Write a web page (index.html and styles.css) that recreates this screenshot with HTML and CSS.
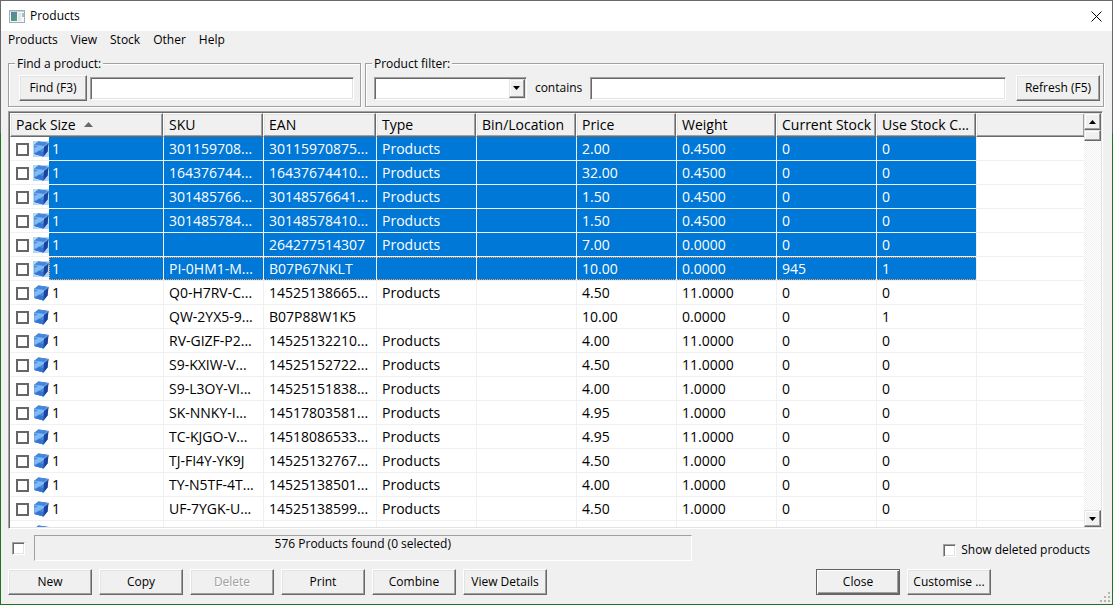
FILE: index.html
```html
<!DOCTYPE html>
<html lang="en">
<head>
    <meta charset="UTF-8">
    <meta name="viewport" content="width=device-width, initial-scale=1.0">
    <title>Products</title>
    <link rel="stylesheet" href="styles.css">
</head>
<body>

<!-- Shared icons -->
<svg class="icon-defs" aria-hidden="true">
    <symbol id="cube" viewBox="0 0 16 16">
        <path d="M1 4 L5.5 0.5 L15.5 2 L14.5 10.5 L10.5 15.5 L1.5 13 Z" fill="#2a62c0"/>
        <path d="M1 4 L5.5 0.5 L15.5 2 L11 5.5 Z" fill="#4388dc"/>
        <path d="M1 4 L11 5.5 L10.5 15.5 L1.5 13 Z" fill="#4a8fe6"/>
        <path d="M1.2 7 L6 4.8 L11 5.5 L10.9 7 L1.4 12 Z" fill="#83baf4"/>
        <path d="M1.5 13 L6 10 L10.8 11 L10.5 15.5 Z" fill="#3574d2"/>
        <path d="M11 5.5 L15.5 2 L14.5 10.5 L10.5 15.5 Z" fill="#1d449c"/>
        <path d="M1 4 L11 5.5 L15.5 2" fill="none" stroke="#8fc0f4" stroke-width="0.8"/>
    </symbol>
</svg>

<div class="window">
    <header class="title-bar">
        <svg class="app-icon" viewBox="0 0 16 13" aria-hidden="true">
            <defs>
                <linearGradient id="pane" x1="0" y1="0" x2="1" y2="1">
                    <stop offset="0" stop-color="#5b7fb0"/>
                    <stop offset="1" stop-color="#4fa36c"/>
                </linearGradient>
            </defs>
            <rect x="0.5" y="0.5" width="15" height="12" fill="#f4f6f8" stroke="#a3abb3"/>
            <rect x="1" y="1" width="14" height="1" fill="#c9d2da"/>
            <rect x="2" y="2" width="6" height="9" fill="url(#pane)"/>
            <rect x="9" y="3" width="3" height="8" fill="#dfe5ea"/>
            <rect x="13" y="3" width="2" height="4" fill="#9fc7a8"/>
        </svg>
        <h1>Products</h1>
        <button class="close-box" type="button" aria-label="Close window">
            <svg viewBox="0 0 11 11"><path d="M0.5 0.5 L10.5 10.5 M10.5 0.5 L0.5 10.5" stroke="#000" fill="none"/></svg>
        </button>
    </header>

    <nav class="menu">
        <a href="#">Products</a>
        <a href="#">View</a>
        <a href="#">Stock</a>
        <a href="#">Other</a>
        <a href="#">Help</a>
    </nav>

    <!-- Search and filter -->
    <div class="toolbar">
        <fieldset class="group find">
            <legend>Find a product:</legend>
            <div class="group-row">
                <button class="btn" type="button">Find (F3)</button>
                <input class="field" type="text" aria-label="Find a product">
            </div>
        </fieldset>
        <fieldset class="group filter">
            <legend>Product filter:</legend>
            <div class="group-row">
                <div class="combo">
                    <select id="filter-field" class="field" aria-label="Filter field">
                        <option value=""></option>
                    </select>
                    <span class="combo-arrow"><svg viewBox="0 0 7 4"><path d="M0 0 H7 L3.5 4 Z"/></svg></span>
                </div>
                <label for="filter-text">contains</label>
                <input id="filter-text" class="field" type="text">
                <button class="btn refresh" type="button">Refresh (F5)</button>
            </div>
        </fieldset>
    </div>

    <!-- Product list -->
    <div class="list">
        <div class="list-body">
            <table>
                <colgroup>
                    <col class="col-pack">
                    <col class="col">
                    <col class="col-ean">
                    <col class="col"><col class="col"><col class="col">
                    <col class="col"><col class="col"><col class="col">
                    <col>
                </colgroup>
                <thead>
                    <tr>
                        <th>Pack Size <svg class="sort" viewBox="0 0 9 5"><path d="M0 5 L4.5 0 L9 5 Z"/></svg></th>
                        <th>SKU</th>
                        <th>EAN</th>
                        <th>Type</th>
                        <th>Bin/Location</th>
                        <th>Price</th>
                        <th>Weight</th>
                        <th>Current Stock</th>
                        <th>Use Stock C...</th>
                        <th></th>
                    </tr>
                </thead>
                <tbody id="product-rows"></tbody>
            </table>
        </div>
        <div class="scrollbar">
            <button type="button" aria-label="Scroll up"><svg viewBox="0 0 7 4"><path d="M0 4 H7 L3.5 0 Z"/></svg></button>
            <div class="thumb"></div>
            <button class="down" type="button" aria-label="Scroll down"><svg viewBox="0 0 7 4"><path d="M0 0 H7 L3.5 4 Z"/></svg></button>
        </div>
    </div>

    <!-- Status line -->
    <div class="status">
        <input class="check" type="checkbox" aria-label="Select all">
        <div class="status-text">576 Products found (0 selected)</div>
        <label class="deleted"><input class="check" type="checkbox"> Show deleted products</label>
    </div>

    <footer class="actions">
        <button class="btn" type="button">New</button>
        <button class="btn" type="button">Copy</button>
        <button class="btn" type="button" disabled>Delete</button>
        <button class="btn" type="button">Print</button>
        <button class="btn" type="button">Combine</button>
        <button class="btn" type="button">View Details</button>
        <button class="btn default" type="button">Close</button>
        <button class="btn" type="button">Customise ...</button>
    </footer>

    <svg class="grip" viewBox="0 0 10 10" aria-hidden="true">
        <path d="M8 0h2v2h-2z M4 4h2v2h-2z M8 4h2v2h-2z M0 8h2v2h-2z M4 8h2v2h-2z M8 8h2v2h-2z" fill="#b8b4a8"/>
    </svg>
</div>

<script>
    // sku, ean, type, bin, price, weight, stock, use stock control
    const products = [
        ['301159708...', '30115970875...', 'Products', '', '2.00', '0.4500', '0', '0'],
        ['164376744...', '16437674410...', 'Products', '', '32.00', '0.4500', '0', '0'],
        ['301485766...', '30148576641...', 'Products', '', '1.50', '0.4500', '0', '0'],
        ['301485784...', '30148578410...', 'Products', '', '1.50', '0.4500', '0', '0'],
        ['', '264277514307', 'Products', '', '7.00', '0.0000', '0', '0'],
        ['PI-0HM1-M...', 'B07P67NKLT', '', '', '10.00', '0.0000', '945', '1'],
        ['Q0-H7RV-C...', '14525138665...', 'Products', '', '4.50', '11.0000', '0', '0'],
        ['QW-2YX5-9...', 'B07P88W1K5', '', '', '10.00', '0.0000', '0', '1'],
        ['RV-GIZF-P2...', '14525132210...', 'Products', '', '4.00', '11.0000', '0', '0'],
        ['S9-KXIW-V...', '14525152722...', 'Products', '', '4.50', '11.0000', '0', '0'],
        ['S9-L3OY-VI...', '14525151838...', 'Products', '', '4.00', '1.0000', '0', '0'],
        ['SK-NNKY-I...', '14517803581...', 'Products', '', '4.95', '1.0000', '0', '0'],
        ['TC-KJGO-V...', '14518086533...', 'Products', '', '4.95', '11.0000', '0', '0'],
        ['TJ-FI4Y-YK9J', '14525132767...', 'Products', '', '4.50', '1.0000', '0', '0'],
        ['TY-N5TF-4T...', '14525138501...', 'Products', '', '4.00', '1.0000', '0', '0'],
        ['UF-7YGK-U...', '14525138599...', 'Products', '', '4.50', '1.0000', '0', '0'],
        ['', '', '', '', '', '', '', '']
    ];
    const selectedCount = 6;

    const tbody = document.getElementById('product-rows');
    products.forEach((product, index) => {
        const row = document.createElement('tr');
        if (index < selectedCount) row.classList.add('selected');
        if (index === selectedCount - 1) row.classList.add('focused');
        const packSize = index < products.length - 1 ? '1' : '';
        row.innerHTML = `
            <td><div class="pack">
                <input class="row-check" type="checkbox" aria-label="Tick row ${index + 1}">
                <svg class="cube"><use href="#cube"/></svg>
                <span>${packSize}</span>
            </div></td>
            ${product.map(value => `<td>${value}</td>`).join('')}
            <td></td>
        `;
        tbody.appendChild(row);
    });
</script>

</body>
</html>
```
FILE: styles.css
```css
* {
    box-sizing: border-box;
}

body {
    margin: 0;
    padding: 1px;
    height: 100vh;
    background: linear-gradient(#6b686b 22%, #1f741f 22%);
    font-family: 'Open Sans', 'Noto Sans', sans-serif;
    font-size: 12px;
    line-height: 16px;
    color: #000;
}

button, input, select {
    font: inherit;
    color: inherit;
    margin: 0;
}

.icon-defs {
    position: absolute;
    width: 0;
    height: 0;
}

.window {
    position: relative;
    display: flex;
    flex-direction: column;
    height: 100%;
    background-color: #f0f0f0;
    overflow: hidden;
}

/* Title bar and menu */
.title-bar {
    display: flex;
    align-items: center;
    height: 30px;
    padding: 0 10px 0 8px;
    background-color: #fff;
}

.title-bar h1 {
    flex: 1;
    margin: 0 0 0 5px;
    font-size: 12px;
    font-weight: normal;
}

.app-icon {
    width: 16px;
    height: 13px;
}

.close-box {
    padding: 0;
    border: none;
    background: none;
    line-height: 0;
}

.close-box svg {
    width: 11px;
    height: 11px;
}

.menu {
    display: flex;
    gap: 13px;
    height: 19px;
    padding: 1px 7px;
}

.menu a {
    color: #000;
    text-decoration: none;
}

/* Etched group boxes */
.toolbar {
    display: flex;
    gap: 4px;
    margin: 5px 8px 4px 7px;
}

.group {
    min-width: 0;
    margin: 0;
    padding: 3px 6px 5px;
    border: 1px solid #a0a0a0;
    box-shadow: 1px 1px #fff, inset 1px 1px #fff;
}

.group.find {
    flex: 0 0 32.2%;
}

.group.filter {
    flex: 1;
}

.group legend {
    padding: 1px 2px 0;
    background-color: #f0f0f0;
}

.group-row {
    display: flex;
    align-items: center;
    height: 26px;
}

.find .group-row {
    gap: 3px;
    padding-left: 4px;
}

.filter .group-row {
    gap: 8px;
    padding-left: 2px;
}

.find .btn {
    width: 68px;
}

.btn.refresh {
    margin-left: 2px;
    margin-right: -3px;
}

.btn {
    flex: none;
    width: 84px;
    height: 26px;
    padding: 0;
    border: 1px solid;
    border-color: #fff #696969 #696969 #fff;
    background-color: #f0f0f0;
    box-shadow: inset -1px -1px #a0a0a0, inset 1px 1px #e3e3e3;
    white-space: nowrap;
}

.btn:disabled {
    color: #a0a0a0;
    text-shadow: 1px 1px #fff;
}

.btn.default {
    border-color: #646464;
    box-shadow: inset 1px 1px #fff, inset -1px -1px #696969, inset -2px -2px #a0a0a0;
}

.field {
    flex: 1;
    min-width: 0;
    height: 23px;
    padding: 0 4px;
    border: 1px solid;
    border-color: #a0a0a0 #fff #fff #a0a0a0;
    border-radius: 0;
    background-color: #fff;
    box-shadow: inset 1px 1px #696969, inset -1px -1px #e3e3e3;
}

.combo {
    position: relative;
    display: flex;
    width: 153px;
}

.combo .field {
    appearance: none;
}

.combo-arrow {
    position: absolute;
    top: 2px;
    right: 2px;
    bottom: 2px;
    display: flex;
    align-items: center;
    justify-content: center;
    width: 16px;
    border: 1px solid;
    border-color: #e3e3e3 #696969 #696969 #e3e3e3;
    background-color: #f0f0f0;
    box-shadow: inset -1px -1px #a0a0a0, inset 1px 1px #fff;
    pointer-events: none;
}

.combo-arrow svg, .scrollbar svg {
    width: 7px;
    height: 4px;
}

/* Product list */
.list {
    display: flex;
    flex: 1;
    min-height: 0;
    margin: 0 9px 0 7px;
    padding: 1px;
    border: 1px solid;
    border-color: #a0a0a0 #fff #fff #a0a0a0;
    background-color: #fff;
    box-shadow: inset 1px 1px #696969, inset -1px -1px #e3e3e3;
}

.list-body {
    flex: 1;
    min-width: 0;
    overflow: hidden;
}

table {
    width: 100%;
    table-layout: fixed;
    border-collapse: separate;
    border-spacing: 0;
    font-size: 14px;
    line-height: 20px;
}

.col-pack {
    width: 153px;
}

.col {
    width: 100px;
}

.col-ean {
    width: 113px;
}

th {
    height: 24px;
    padding: 0 0 0 5px;
    border: 1px solid;
    border-color: #fff #696969 #696969 #fff;
    background-color: #f0f0f0;
    box-shadow: inset -1px -1px #a0a0a0, inset 1px 1px #e3e3e3;
    font-weight: normal;
    text-align: left;
    white-space: nowrap;
    overflow: hidden;
}

th:last-child {
    border-right: none;
}

.sort {
    width: 9px;
    height: 5px;
    margin: 0 0 3px 5px;
    fill: #696969;
}

td {
    height: 24px;
    padding: 0 0 0 5px;
    border-left: 1px solid #f0f0f0;
    border-bottom: 1px solid #f0f0f0;
    white-space: nowrap;
    overflow: hidden;
}

td:first-child {
    padding: 0;
    border-left: none;
}

.selected td:not(:last-child) {
    background-color: #0078d7;
    color: #fff;
}

.selected td:not(:last-child):first-child {
    background-color: #fff;
}

.pack {
    display: flex;
    align-items: flex-start;
    height: 23px;
    padding-left: 6px;
}

.pack span {
    flex: 1;
    height: 23px;
    padding: 2px 0 0 3px;
}

.selected .pack span {
    background-color: #0078d7;
}

/* Focus rectangle round the last selected row */
.focused td:not(:first-child):not(:last-child) {
    background-image: repeating-linear-gradient(90deg, #f0a060 0 1px, transparent 1px 2px),
        repeating-linear-gradient(90deg, #f0a060 0 1px, transparent 1px 2px);
    background-position: top, bottom;
    background-size: 100% 1px;
    background-repeat: no-repeat;
    background-clip: padding-box;
}

.focused .pack span {
    border: 1px dotted #f0a060;
    border-right: none;
    padding: 1px 0 0 2px;
}

.row-check {
    appearance: none;
    width: 13px;
    height: 13px;
    margin-top: 6px;
    border: 2px solid #666;
    background-color: #fff;
}

.cube {
    width: 16px;
    height: 16px;
    margin: 4px 0 0 4px;
}

.selected .cube {
    background-color: #b5d7f3;
}

/* Scrollbar */
.scrollbar {
    display: flex;
    flex-direction: column;
    width: 17px;
    background: repeating-conic-gradient(#f0f0f0 0 25%, #fff 0 50%) 0 0 / 2px 2px;
}

.scrollbar button, .thumb {
    display: flex;
    align-items: center;
    justify-content: center;
    height: 17px;
    padding: 0;
    border: 1px solid;
    border-color: #e3e3e3 #696969 #696969 #e3e3e3;
    background-color: #f0f0f0;
    box-shadow: inset -1px -1px #a0a0a0, inset 1px 1px #fff;
}

.thumb {
    height: 11px;
}

.scrollbar .down {
    margin-top: auto;
}

/* Status line and buttons */
.status {
    display: flex;
    align-items: flex-start;
    margin: 6px 22px 8px 11px;
}

.check {
    appearance: none;
    flex: none;
    width: 13px;
    height: 13px;
    border: 1px solid;
    border-color: #a0a0a0 #fff #fff #a0a0a0;
    background-color: #fff;
    box-shadow: inset 1px 1px #696969, inset -1px -1px #e3e3e3;
}

.status > .check {
    margin: 7px 9px 0 0;
}

.status-text {
    width: 61%;
    height: 26px;
    border: 1px solid;
    border-color: #a0a0a0 #fff #fff #a0a0a0;
    text-align: center;
}

.deleted {
    display: flex;
    align-items: center;
    gap: 5px;
    margin: 7px 0 0 auto;
}

.actions {
    display: flex;
    gap: 7px;
    padding: 0 121px 9px 7px;
}

.btn.default {
    margin-left: auto;
}

.grip {
    position: absolute;
    right: 2px;
    bottom: 2px;
    width: 10px;
    height: 10px;
}
```
